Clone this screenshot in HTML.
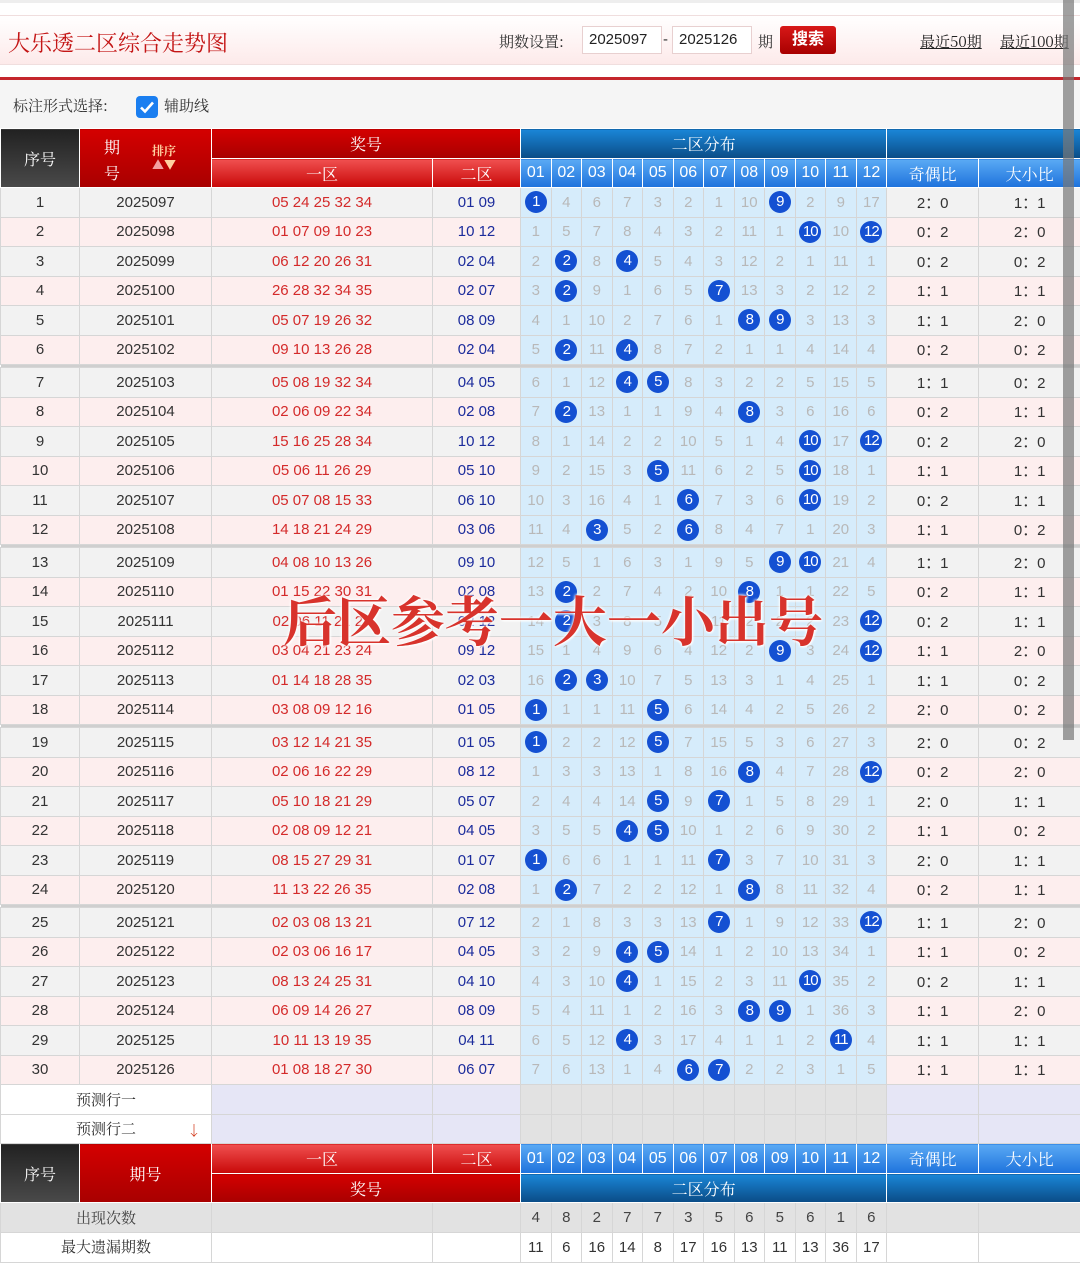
<!DOCTYPE html>
<html><head><meta charset="utf-8">
<style>
*{margin:0;padding:0;box-sizing:border-box}
body{width:1080px;height:1243px;overflow:hidden;background:#fff;font-family:"Liberation Sans","Noto Sans CJK SC",sans-serif;position:relative}
.cn{font-family:"Noto Serif CJK SC","Noto Sans CJK SC",serif}
#topline{position:absolute;left:0;top:0;width:1080px;height:3px;background:#eee}
#hdr{position:absolute;left:0;top:15px;width:1080px;height:50px;background:linear-gradient(#fff,#fdeaea);border-top:1px solid #f0dede;border-bottom:1px solid #f0dede}
#title{position:absolute;left:8px;top:11px;font-size:22px;color:#c41616}
#ps{position:absolute;left:499px;top:15px;font-size:15px;color:#333}
.inp{position:absolute;top:10px;height:28px;border:1px solid #e8d0d0;background:#fff;font-size:15px;line-height:26px;padding-left:6px;color:#222}
#btn{position:absolute;left:780px;top:10px;width:56px;height:28px;background:linear-gradient(#d81818,#a80000);border-radius:3px;color:#fff;font-size:16px;line-height:28px;text-align:center;font-weight:bold}
.lk{position:absolute;top:15px;font-size:15px;color:#222;text-decoration:underline}
#redline{position:absolute;left:0;top:77px;width:1080px;height:3px;background:#c4262c}
#opt{position:absolute;left:0;top:80px;width:1080px;height:48px;background:#f5f5f5}
#opt span{position:absolute;top:15px;font-size:15px;color:#333}
#cb{position:absolute;left:136px;top:96px;width:22px;height:22px;background:#1a7ef0;border-radius:4px}
table{position:absolute;left:0;top:128px;border-collapse:collapse;table-layout:fixed;width:1080px}
td{border:1px solid #d6d6d6;text-align:center;font-size:15px;color:#333;padding:0;overflow:hidden;white-space:nowrap}
.hd td{color:#fff;border:1px solid #fff;font-size:16px}
.dk{background:linear-gradient(#222,#4a4a4a)}
.rd{background:linear-gradient(#d40000,#a80000)}
.rl{background:linear-gradient(#f05050,#c80808)}
.bd{background:linear-gradient(#1a86d8,#0a4c86)}
.bl{background:linear-gradient(#5aaaf4,#1e72dc)}
tr.r{height:29.5px}
tr.o td{background:#f2f2f2}
tr.e td{background:#fdeeee}
tr.r td:nth-child(3){color:#d42a2a}
tr.r td:nth-child(4){color:#1c2c9c}
tr.r td:nth-child(n+5):nth-child(-n+16){background:#d6ecfb;color:#b8b8b8}
tr.sp{height:3px}
tr.sp td{background:#cfcfcf;border:none}
i{display:inline-block;width:22px;height:22px;border-radius:50%;background:#1450d2;color:#fff;font-style:normal;line-height:22px;font-size:15px;letter-spacing:-1px;vertical-align:middle}
tr.p{height:29.5px}
tr.p td{background:#e6e6f6}
tr.p td.w{background:#fff}
tr.p td.g{background:#e2e2e2}
tr.c td{background:#e2e2e2;color:#444}
#wm{position:absolute;left:283px;top:580px;font-size:54px;font-weight:bold;color:#d8332c;font-family:"Noto Serif CJK SC",serif;letter-spacing:0px;text-shadow:0 0 3px #fff,0 0 3px #fff,1px 1px 2px #fff;white-space:nowrap}
#sb{position:absolute;left:1063px;top:0;width:11px;height:740px;background:rgba(120,120,120,.7)}
</style></head><body>
<div id="topline"></div>
<div id="hdr">
<div id="title" class="cn">大乐透二区综合走势图</div>
<div id="ps" class="cn">期数设置:</div>
<div class="inp" style="left:582px;width:80px">2025097</div>
<div style="position:absolute;left:663px;top:15px;font-size:15px;color:#333">-</div>
<div class="inp" style="left:672px;width:80px">2025126</div>
<div class="cn" style="position:absolute;left:758px;top:15px;font-size:15px;color:#333">期</div>
<div id="btn">搜索</div>
<div class="lk cn" style="left:920px">最近50期</div>
<div class="lk cn" style="left:1000px">最近100期</div>
</div>
<div id="redline"></div>
<div id="opt"><span class="cn" style="left:13px">标注形式选择:</span><span class="cn" style="left:164px">辅助线</span></div>
<div id="cb"><svg width="22" height="22"><path d="M5 11.5l4 4 8-9" stroke="#fff" stroke-width="2.6" fill="none"/></svg></div>
<table>
<colgroup><col style="width:79px"><col style="width:132px"><col style="width:221px"><col style="width:88px"><col style="width:30.5px"><col style="width:30.5px"><col style="width:30.5px"><col style="width:30.5px"><col style="width:30.5px"><col style="width:30.5px"><col style="width:30.5px"><col style="width:30.5px"><col style="width:30.5px"><col style="width:30.5px"><col style="width:30.5px"><col style="width:30.5px"><col style="width:92px"><col style="width:102px"></colgroup>
<tr class="hd" style="height:30px"><td rowspan="2" class="dk cn">序号</td><td rowspan="2" class="rd cn" style="position:relative"><span style="position:absolute;left:24px;top:5px;line-height:26px;width:16px;white-space:normal">期 号</span><span style="position:absolute;left:72px;top:15px;font-size:12px;color:#ffd0a0;font-weight:bold;line-height:14px">排序<br><span style="color:#f3a0a0">▲</span>▼</span></td><td colspan="2" class="rd cn">奖号</td><td colspan="12" class="bd cn">二区分布</td><td colspan="2" class="bd"></td></tr>
<tr class="hd" style="height:29px"><td class="rl cn">一区</td><td class="rl cn">二区</td><td class="bl">01</td><td class="bl">02</td><td class="bl">03</td><td class="bl">04</td><td class="bl">05</td><td class="bl">06</td><td class="bl">07</td><td class="bl">08</td><td class="bl">09</td><td class="bl">10</td><td class="bl">11</td><td class="bl">12</td><td class="bl cn">奇偶比</td><td class="bl cn">大小比</td></tr>
<tr class="r o"><td>1</td><td>2025097</td><td>05 24 25 32 34</td><td>01 09</td><td><i>1</i></td><td>4</td><td>6</td><td>7</td><td>3</td><td>2</td><td>1</td><td>10</td><td><i>9</i></td><td>2</td><td>9</td><td>17</td><td>2：0</td><td>1：1</td></tr>
<tr class="r e"><td>2</td><td>2025098</td><td>01 07 09 10 23</td><td>10 12</td><td>1</td><td>5</td><td>7</td><td>8</td><td>4</td><td>3</td><td>2</td><td>11</td><td>1</td><td><i>10</i></td><td>10</td><td><i>12</i></td><td>0：2</td><td>2：0</td></tr>
<tr class="r o"><td>3</td><td>2025099</td><td>06 12 20 26 31</td><td>02 04</td><td>2</td><td><i>2</i></td><td>8</td><td><i>4</i></td><td>5</td><td>4</td><td>3</td><td>12</td><td>2</td><td>1</td><td>11</td><td>1</td><td>0：2</td><td>0：2</td></tr>
<tr class="r e"><td>4</td><td>2025100</td><td>26 28 32 34 35</td><td>02 07</td><td>3</td><td><i>2</i></td><td>9</td><td>1</td><td>6</td><td>5</td><td><i>7</i></td><td>13</td><td>3</td><td>2</td><td>12</td><td>2</td><td>1：1</td><td>1：1</td></tr>
<tr class="r o"><td>5</td><td>2025101</td><td>05 07 19 26 32</td><td>08 09</td><td>4</td><td>1</td><td>10</td><td>2</td><td>7</td><td>6</td><td>1</td><td><i>8</i></td><td><i>9</i></td><td>3</td><td>13</td><td>3</td><td>1：1</td><td>2：0</td></tr>
<tr class="r e"><td>6</td><td>2025102</td><td>09 10 13 26 28</td><td>02 04</td><td>5</td><td><i>2</i></td><td>11</td><td><i>4</i></td><td>8</td><td>7</td><td>2</td><td>1</td><td>1</td><td>4</td><td>14</td><td>4</td><td>0：2</td><td>0：2</td></tr>
<tr class="sp"><td colspan="18"></td></tr>
<tr class="r o"><td>7</td><td>2025103</td><td>05 08 19 32 34</td><td>04 05</td><td>6</td><td>1</td><td>12</td><td><i>4</i></td><td><i>5</i></td><td>8</td><td>3</td><td>2</td><td>2</td><td>5</td><td>15</td><td>5</td><td>1：1</td><td>0：2</td></tr>
<tr class="r e"><td>8</td><td>2025104</td><td>02 06 09 22 34</td><td>02 08</td><td>7</td><td><i>2</i></td><td>13</td><td>1</td><td>1</td><td>9</td><td>4</td><td><i>8</i></td><td>3</td><td>6</td><td>16</td><td>6</td><td>0：2</td><td>1：1</td></tr>
<tr class="r o"><td>9</td><td>2025105</td><td>15 16 25 28 34</td><td>10 12</td><td>8</td><td>1</td><td>14</td><td>2</td><td>2</td><td>10</td><td>5</td><td>1</td><td>4</td><td><i>10</i></td><td>17</td><td><i>12</i></td><td>0：2</td><td>2：0</td></tr>
<tr class="r e"><td>10</td><td>2025106</td><td>05 06 11 26 29</td><td>05 10</td><td>9</td><td>2</td><td>15</td><td>3</td><td><i>5</i></td><td>11</td><td>6</td><td>2</td><td>5</td><td><i>10</i></td><td>18</td><td>1</td><td>1：1</td><td>1：1</td></tr>
<tr class="r o"><td>11</td><td>2025107</td><td>05 07 08 15 33</td><td>06 10</td><td>10</td><td>3</td><td>16</td><td>4</td><td>1</td><td><i>6</i></td><td>7</td><td>3</td><td>6</td><td><i>10</i></td><td>19</td><td>2</td><td>0：2</td><td>1：1</td></tr>
<tr class="r e"><td>12</td><td>2025108</td><td>14 18 21 24 29</td><td>03 06</td><td>11</td><td>4</td><td><i>3</i></td><td>5</td><td>2</td><td><i>6</i></td><td>8</td><td>4</td><td>7</td><td>1</td><td>20</td><td>3</td><td>1：1</td><td>0：2</td></tr>
<tr class="sp"><td colspan="18"></td></tr>
<tr class="r o"><td>13</td><td>2025109</td><td>04 08 10 13 26</td><td>09 10</td><td>12</td><td>5</td><td>1</td><td>6</td><td>3</td><td>1</td><td>9</td><td>5</td><td><i>9</i></td><td><i>10</i></td><td>21</td><td>4</td><td>1：1</td><td>2：0</td></tr>
<tr class="r e"><td>14</td><td>2025110</td><td>01 15 22 30 31</td><td>02 08</td><td>13</td><td><i>2</i></td><td>2</td><td>7</td><td>4</td><td>2</td><td>10</td><td><i>8</i></td><td>1</td><td>1</td><td>22</td><td>5</td><td>0：2</td><td>1：1</td></tr>
<tr class="r o"><td>15</td><td>2025111</td><td>02 06 11 21 25</td><td>02 12</td><td>14</td><td><i>2</i></td><td>3</td><td>8</td><td>5</td><td>3</td><td>11</td><td>2</td><td>2</td><td>2</td><td>23</td><td><i>12</i></td><td>0：2</td><td>1：1</td></tr>
<tr class="r e"><td>16</td><td>2025112</td><td>03 04 21 23 24</td><td>09 12</td><td>15</td><td>1</td><td>4</td><td>9</td><td>6</td><td>4</td><td>12</td><td>2</td><td><i>9</i></td><td>3</td><td>24</td><td><i>12</i></td><td>1：1</td><td>2：0</td></tr>
<tr class="r o"><td>17</td><td>2025113</td><td>01 14 18 28 35</td><td>02 03</td><td>16</td><td><i>2</i></td><td><i>3</i></td><td>10</td><td>7</td><td>5</td><td>13</td><td>3</td><td>1</td><td>4</td><td>25</td><td>1</td><td>1：1</td><td>0：2</td></tr>
<tr class="r e"><td>18</td><td>2025114</td><td>03 08 09 12 16</td><td>01 05</td><td><i>1</i></td><td>1</td><td>1</td><td>11</td><td><i>5</i></td><td>6</td><td>14</td><td>4</td><td>2</td><td>5</td><td>26</td><td>2</td><td>2：0</td><td>0：2</td></tr>
<tr class="sp"><td colspan="18"></td></tr>
<tr class="r o"><td>19</td><td>2025115</td><td>03 12 14 21 35</td><td>01 05</td><td><i>1</i></td><td>2</td><td>2</td><td>12</td><td><i>5</i></td><td>7</td><td>15</td><td>5</td><td>3</td><td>6</td><td>27</td><td>3</td><td>2：0</td><td>0：2</td></tr>
<tr class="r e"><td>20</td><td>2025116</td><td>02 06 16 22 29</td><td>08 12</td><td>1</td><td>3</td><td>3</td><td>13</td><td>1</td><td>8</td><td>16</td><td><i>8</i></td><td>4</td><td>7</td><td>28</td><td><i>12</i></td><td>0：2</td><td>2：0</td></tr>
<tr class="r o"><td>21</td><td>2025117</td><td>05 10 18 21 29</td><td>05 07</td><td>2</td><td>4</td><td>4</td><td>14</td><td><i>5</i></td><td>9</td><td><i>7</i></td><td>1</td><td>5</td><td>8</td><td>29</td><td>1</td><td>2：0</td><td>1：1</td></tr>
<tr class="r e"><td>22</td><td>2025118</td><td>02 08 09 12 21</td><td>04 05</td><td>3</td><td>5</td><td>5</td><td><i>4</i></td><td><i>5</i></td><td>10</td><td>1</td><td>2</td><td>6</td><td>9</td><td>30</td><td>2</td><td>1：1</td><td>0：2</td></tr>
<tr class="r o"><td>23</td><td>2025119</td><td>08 15 27 29 31</td><td>01 07</td><td><i>1</i></td><td>6</td><td>6</td><td>1</td><td>1</td><td>11</td><td><i>7</i></td><td>3</td><td>7</td><td>10</td><td>31</td><td>3</td><td>2：0</td><td>1：1</td></tr>
<tr class="r e"><td>24</td><td>2025120</td><td>11 13 22 26 35</td><td>02 08</td><td>1</td><td><i>2</i></td><td>7</td><td>2</td><td>2</td><td>12</td><td>1</td><td><i>8</i></td><td>8</td><td>11</td><td>32</td><td>4</td><td>0：2</td><td>1：1</td></tr>
<tr class="sp"><td colspan="18"></td></tr>
<tr class="r o"><td>25</td><td>2025121</td><td>02 03 08 13 21</td><td>07 12</td><td>2</td><td>1</td><td>8</td><td>3</td><td>3</td><td>13</td><td><i>7</i></td><td>1</td><td>9</td><td>12</td><td>33</td><td><i>12</i></td><td>1：1</td><td>2：0</td></tr>
<tr class="r e"><td>26</td><td>2025122</td><td>02 03 06 16 17</td><td>04 05</td><td>3</td><td>2</td><td>9</td><td><i>4</i></td><td><i>5</i></td><td>14</td><td>1</td><td>2</td><td>10</td><td>13</td><td>34</td><td>1</td><td>1：1</td><td>0：2</td></tr>
<tr class="r o"><td>27</td><td>2025123</td><td>08 13 24 25 31</td><td>04 10</td><td>4</td><td>3</td><td>10</td><td><i>4</i></td><td>1</td><td>15</td><td>2</td><td>3</td><td>11</td><td><i>10</i></td><td>35</td><td>2</td><td>0：2</td><td>1：1</td></tr>
<tr class="r e"><td>28</td><td>2025124</td><td>06 09 14 26 27</td><td>08 09</td><td>5</td><td>4</td><td>11</td><td>1</td><td>2</td><td>16</td><td>3</td><td><i>8</i></td><td><i>9</i></td><td>1</td><td>36</td><td>3</td><td>1：1</td><td>2：0</td></tr>
<tr class="r o"><td>29</td><td>2025125</td><td>10 11 13 19 35</td><td>04 11</td><td>6</td><td>5</td><td>12</td><td><i>4</i></td><td>3</td><td>17</td><td>4</td><td>1</td><td>1</td><td>2</td><td><i>11</i></td><td>4</td><td>1：1</td><td>1：1</td></tr>
<tr class="r e"><td>30</td><td>2025126</td><td>01 08 18 27 30</td><td>06 07</td><td>7</td><td>6</td><td>13</td><td>1</td><td>4</td><td><i>6</i></td><td><i>7</i></td><td>2</td><td>2</td><td>3</td><td>1</td><td>5</td><td>1：1</td><td>1：1</td></tr>
<tr class="p"><td colspan="2" class="w cn">预测行一</td><td></td><td></td><td class="g"></td><td class="g"></td><td class="g"></td><td class="g"></td><td class="g"></td><td class="g"></td><td class="g"></td><td class="g"></td><td class="g"></td><td class="g"></td><td class="g"></td><td class="g"></td><td></td><td></td></tr>
<tr class="p"><td colspan="2" class="w cn" style="position:relative">预测行二<span style="position:absolute;left:186px;top:6px;color:#d03010;font-size:14px;font-weight:bold">↓</span></td><td></td><td></td><td class="g"></td><td class="g"></td><td class="g"></td><td class="g"></td><td class="g"></td><td class="g"></td><td class="g"></td><td class="g"></td><td class="g"></td><td class="g"></td><td class="g"></td><td class="g"></td><td></td><td></td></tr>
<tr class="hd" style="height:30px"><td rowspan="2" class="dk cn">序号</td><td rowspan="2" class="rd cn">期号</td><td class="rl cn">一区</td><td class="rl cn">二区</td><td class="bl">01</td><td class="bl">02</td><td class="bl">03</td><td class="bl">04</td><td class="bl">05</td><td class="bl">06</td><td class="bl">07</td><td class="bl">08</td><td class="bl">09</td><td class="bl">10</td><td class="bl">11</td><td class="bl">12</td><td class="bl cn">奇偶比</td><td class="bl cn">大小比</td></tr>
<tr class="hd" style="height:29px"><td colspan="2" class="rd cn">奖号</td><td colspan="12" class="bd cn">二区分布</td><td colspan="2" class="bd"></td></tr>
<tr class="c" style="height:30px"><td colspan="2" class="cn">出现次数</td><td></td><td></td><td>4</td><td>8</td><td>2</td><td>7</td><td>7</td><td>3</td><td>5</td><td>6</td><td>5</td><td>6</td><td>1</td><td>6</td><td></td><td></td></tr>
<tr style="height:30px"><td colspan="2" class="cn" style="vertical-align:top;padding-top:3px">最大遗漏期数</td><td></td><td></td><td>11</td><td>6</td><td>16</td><td>14</td><td>8</td><td>17</td><td>16</td><td>13</td><td>11</td><td>13</td><td>36</td><td>17</td><td></td><td></td></tr>
</table>
<div id="wm">后区参考一大一小出号</div>
<div id="sb"></div>
</body></html>
